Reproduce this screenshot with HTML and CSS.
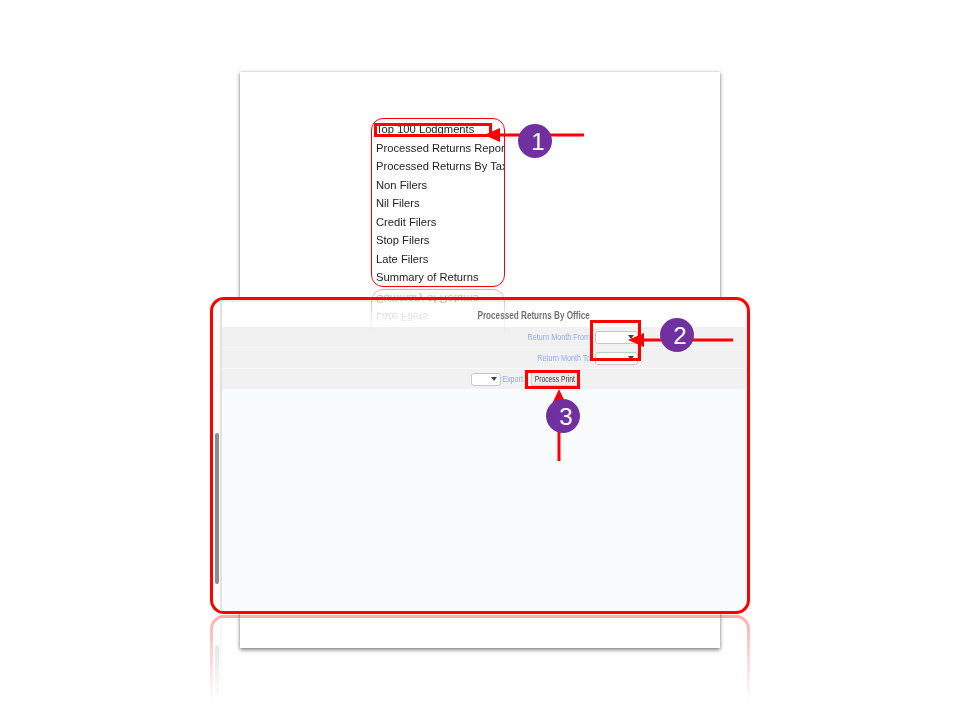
FILE: index.html
```html
<!DOCTYPE html>
<html lang="en">
<head>
<meta charset="utf-8">
<title>Processed Returns By Office</title>
<link rel="stylesheet" href="styles.css">
</head>
<body>
<main class="stage">
  <div class="slide"></div>

  <section class="panel">
    <div class="panel-top"></div>
    <h1 class="panel-title"><span class="panel-title-text">Processed Returns By Office</span></h1>
    <div class="row row-field">
      <label class="field-label">Return Month From</label>
      <select class="month-select"><option></option></select>
    </div>
    <div class="row row-field">
      <label class="field-label">Return Month To</label>
      <select class="month-select"><option></option></select>
    </div>
    <div class="row row-actions">
      <select class="export-select"><option></option></select>
      <span class="field-label export-label">Export</span>
      <button class="print-button" type="button"><span class="print-text">Process Print</span></button>
    </div>
  </section>

  <nav class="menu">
    <a class="menu-item">Top 100 Lodgments</a>
    <a class="menu-item">Processed Returns Report</a>
    <a class="menu-item">Processed Returns By Tax</a>
    <a class="menu-item">Non Filers</a>
    <a class="menu-item">Nil Filers</a>
    <a class="menu-item">Credit Filers</a>
    <a class="menu-item">Stop Filers</a>
    <a class="menu-item">Late Filers</a>
    <a class="menu-item">Summary of Returns</a>
  </nav>

  <div class="focus-box"><div class="scroll-rail"></div><div class="scroll-thumb"></div></div>

  <div class="mark mark-menu"></div>
  <div class="mark mark-months"></div>
  <div class="mark mark-print"></div>

  <svg class="arrows" width="960" height="720" viewBox="0 0 960 720" aria-hidden="true">
    <g fill="#ff0000">
      <rect x="498" y="133.500" width="86" height="3"/>
      <polygon points="484,135 500,128 500,142"/>
      <rect x="642" y="338.500" width="91" height="3"/>
      <polygon points="628,340 644,333 644,347"/>
      <rect x="557.500" y="402" width="3" height="59"/>
      <polygon points="559,389 552,404 566,404"/>
    </g>
  </svg>

  <div class="badge badge-1">1</div>
  <div class="badge badge-2">2</div>
  <div class="badge badge-3">3</div>
</main>
</body>
</html>
```
FILE: styles.css
```css
* { box-sizing: border-box; }

html, body { margin: 0; padding: 0; background: #fff; }

body { font-family: "Liberation Sans", Arial, sans-serif; }

.stage {
  position: relative;
  width: 960px;
  height: 720px;
  overflow: hidden;
  background: #fff;
}

.slide {
  position: absolute;
  left: 240px;
  top: 72px;
  width: 480px;
  height: 576px;
  background: #fff;
  box-shadow: 0 2px 4px rgba(0, 0, 0, .45), 0 0 3px rgba(0, 0, 0, .18);
}

/* captured form window */
.panel {
  position: absolute;
  left: 222px;
  top: 299px;
  width: 524px;
  height: 312px;
  display: flex;
  flex-direction: column;
  background: #f8fcfd;
}

.panel-top { height: 3px; background: #e4f6df; }

.panel-title {
  height: 25px;
  margin: 0;
  padding: 7px 156px 0 0;
  background: #fff;
  color: #747474;
  font-size: 10px;
  line-height: 13px;
  font-weight: 700;
  text-align: right;
}

.panel-title-text {
  display: inline-block;
  transform: scaleX(.815);
  transform-origin: right center;
  filter: blur(.35px);
}

.row {
  height: 21px;
  background: #f1f1f1;
  border-bottom: 1px solid #f8f8f8;
}

.row-field {
  display: grid;
  grid-template-columns: 368px 52px;
  column-gap: 5px;
  align-items: center;
}

.row-actions {
  height: 20px;
  display: flex;
  align-items: center;
  padding-left: 249px;
  border-bottom: 0;
}

.field-label {
  justify-self: end;
  color: #93adf2;
  font-size: 9px;
  transform: scaleX(.8);
  transform-origin: right center;
  filter: blur(.3px);
}

.month-select,
.export-select {
  height: 13px;
  margin: 0;
  padding: 0;
  appearance: none;
  background: #fff url("data:image/svg+xml,%3Csvg xmlns='http://www.w3.org/2000/svg' width='6' height='4'%3E%3Cpath d='M0 0h6L3 4z' fill='%23444'/%3E%3C/svg%3E") no-repeat right 3px center;
  border: 1px solid #c8c8c8;
  border-radius: 3px;
  font-size: 8px;
  filter: blur(.25px);
}

.month-select { width: 43px; }

.export-select { width: 30px; }

.export-label { margin-left: -4px; }

.print-button {
  width: 48px;
  height: 14px;
  margin: 0 0 0 8px;
  padding: 0;
  display: flex;
  align-items: center;
  justify-content: center;
  background: #ebebeb;
  border: 1px solid #cfcfcf;
  border-radius: 2px;
  color: #3a3a3a;
  font: 9px/12px "Liberation Sans", Arial, sans-serif;
  white-space: nowrap;
}

.print-text {
  display: inline-block;
  transform: scaleX(.75);
  filter: blur(.25px);
}

/* menu callout */
.menu {
  position: absolute;
  left: 371px;
  top: 118px;
  width: 134px;
  height: 169px;
  padding: 1px 0 0 4px;
  display: flex;
  flex-direction: column;
  overflow: hidden;
  border: 1px solid #ff0000;
  border-radius: 12px;
  -webkit-box-reflect: below 2px linear-gradient(transparent 74%, rgba(255, 255, 255, .36));
}

.menu-item {
  height: 18.500px;
  color: #222;
  font-size: 11.200px;
  line-height: 18.500px;
  white-space: nowrap;
  filter: blur(.3px);
}

/* large outline with its reflection */
.focus-box {
  position: absolute;
  left: 210px;
  top: 297px;
  width: 540px;
  height: 317px;
  border: 3px solid #ff0000;
  border-radius: 14px;
  -webkit-box-reflect: below 1px linear-gradient(transparent 73%, rgba(255, 255, 255, .32));
}

.scroll-rail {
  position: absolute;
  left: 7px;
  top: 0;
  bottom: 0;
  width: 2px;
  background: #e2e2e2;
}

.scroll-thumb {
  position: absolute;
  left: 2px;
  top: 133px;
  width: 4px;
  height: 151px;
  border-radius: 2px;
  background: #8c8c8c;
}

/* rectangles */
.mark {
  position: absolute;
  border: 3px solid #ff0000;
}

.mark-menu { left: 374px; top: 123px; width: 118px; height: 14px; }

.mark-months { left: 590px; top: 320px; width: 51px; height: 41px; }

.mark-print { left: 525px; top: 370px; width: 55px; height: 19px; }

.arrows { position: absolute; left: 0; top: 0; }

.badge {
  position: absolute;
  width: 34px;
  height: 34px;
  padding: 2px 0 0 6px;
  display: flex;
  align-items: center;
  justify-content: center;
  border-radius: 50%;
  background: #7030a0;
  color: #fff;
  font-size: 24px;
  line-height: 1;
}

.badge-1 { left: 518px; top: 124px; }

.badge-2 { left: 660px; top: 318px; }

.badge-3 { left: 546px; top: 399px; }
```
